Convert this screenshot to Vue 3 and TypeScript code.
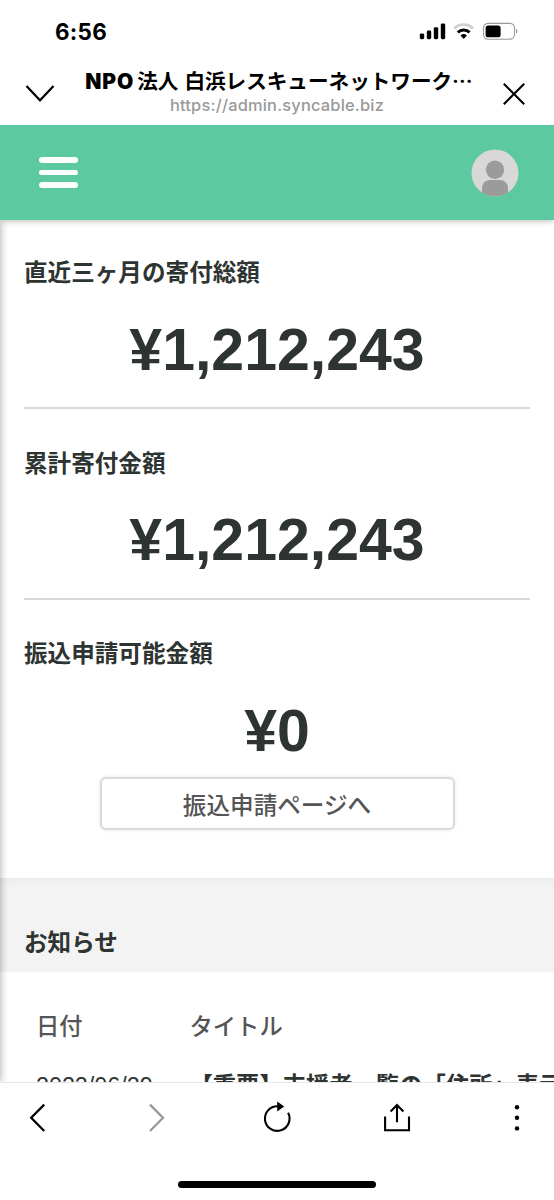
<script setup lang="ts">
interface Summary {
  label: string
  amount: string
}

const summaries: Summary[] = [
  { label: '直近三ヶ月の寄付総額', amount: '¥1,212,243' },
  { label: '累計寄付金額', amount: '¥1,212,243' },
  { label: '振込申請可能金額', amount: '¥0' },
]

const notices = [{ date: '2022/06/29', title: '【重要】支援者一覧の「住所」表示について' }]
</script>

<template>
  <div class="screen">
    <header class="browser-head">
      <div class="status">
        <span class="clock">6:56</span>
        <svg class="status-icons" width="100" height="20" viewBox="0 0 100 20">
          <rect x="0.8" y="12.4" width="4.4" height="5.8" rx="1.4" />
          <rect x="7.8" y="9.6" width="4.4" height="8.6" rx="1.4" />
          <rect x="14.8" y="6.2" width="4.4" height="12" rx="1.4" />
          <rect x="21.8" y="2.4" width="4.4" height="15.8" rx="1.4" />
          <g fill="none" stroke="#000">
            <path d="M35.2 7.4a13.8 13.8 0 0 1 19 0" stroke="#d0d0d0" stroke-width="2.8" />
            <path d="M38.8 11.4a8.6 8.6 0 0 1 11.8 0" stroke-width="2.9" />
          </g>
          <path d="M41.5 14.6a4.7 4.7 0 0 1 6.4 0L44.7 18z" />
          <rect x="64.5" y="2.4" width="31" height="15.8" rx="4.6" fill="none" stroke="#999" stroke-width="1.1" />
          <rect x="66.6" y="4.5" width="15" height="11.8" rx="2.6" />
          <path d="M97.1 7.6q2.6 2.7 0 5.4z" fill="#888" />
        </svg>
      </div>
      <div class="title-row">
        <svg class="chevron" width="32" height="20" viewBox="0 0 32 20">
          <path d="M2.5 2 16 16.3 29.5 2" fill="none" stroke="#000" stroke-width="2.2" />
        </svg>
        <div class="titles">
          <div class="page-title"><b class="latin">NPO</b><span class="jp">法人</span><span class="jp name">白浜レスキューネットワーク…</span></div>
          <div class="url">https://admin.syncable.biz</div>
        </div>
        <svg class="close" width="24" height="24" viewBox="0 0 24 24">
          <path d="M1.8 1.8 22.2 22.2M22.2 1.8 1.8 22.2" stroke="#000" stroke-width="2.1" />
        </svg>
      </div>
    </header>

    <div class="app-bar">
      <div class="burger"><i /><i /><i /></div>
      <svg width="48" height="48" viewBox="0 0 48 48">
        <defs>
          <clipPath id="avatar"><circle cx="24" cy="24" r="23.5" /></clipPath>
        </defs>
        <circle cx="24" cy="24" r="23.5" fill="#d8d8d8" />
        <g clip-path="url(#avatar)" fill="#9b9b9b">
          <circle cx="24" cy="20.7" r="9.2" />
          <rect x="11" y="31" width="26" height="24" rx="8" />
        </g>
      </svg>
    </div>

    <main class="content">
      <section v-for="item in summaries" :key="item.label" class="summary">
        <h2>{{ item.label }}</h2>
        <p class="amount">{{ item.amount }}</p>
      </section>
      <button class="transfer" type="button">振込申請ページへ</button>

      <div class="notice-head">お知らせ</div>
      <div class="table">
        <div class="row labels"><span>日付</span><span>タイトル</span></div>
        <div v-for="n in notices" :key="n.date" class="row">
          <span class="date">{{ n.date }}</span><span class="notice-title">{{ n.title }}</span>
        </div>
      </div>
    </main>

    <footer class="toolbar">
      <nav class="tools">
        <svg width="40" height="40" viewBox="0 0 40 40">
          <path d="M27.2 6.6 14.2 19.8 27.2 33" fill="none" stroke="#000" stroke-width="2.3" />
        </svg>
        <svg width="40" height="40" viewBox="0 0 40 40">
          <path d="M13 6.6 26 19.8 13 33" fill="none" stroke="#999" stroke-width="2.3" />
        </svg>
        <svg width="40" height="40" viewBox="0 0 40 40">
          <path d="M31.1 14.8A12.3 12.3 0 1 1 21 8.3" fill="none" stroke="#000" stroke-width="2.1" />
          <path d="M20.2 3.6 27.2 8.5 20.2 13.4z" />
        </svg>
        <svg width="40" height="40" viewBox="0 0 40 40" fill="none" stroke="#000" stroke-width="2.1">
          <path d="M8.1 18.5V32.3H32V18.5M20 24.2V7.2M13.6 13.4 20 7 26.4 13.4" />
        </svg>
        <svg width="40" height="40" viewBox="0 0 40 40">
          <circle cx="20" cy="9.2" r="2.2" /><circle cx="20" cy="19.8" r="2.2" /><circle cx="20" cy="30.4" r="2.2" />
        </svg>
      </nav>
      <div class="home" />
    </footer>
  </div>
</template>

<style>
body {
  margin: 0;
  background: #fff;
}
</style>

<style scoped>
.screen {
  width: 554px;
  height: 1200px;
  overflow: hidden;
  display: flex;
  flex-direction: column;
  background: #fff;
  color: #2e3432;
  font-family: "Liberation Sans", "Noto Sans CJK JP", sans-serif;
}
.browser-head {
  height: 125px;
  flex: none;
  color: #000;
  background: #fff;
  position: relative;
  z-index: 2;
}
.status {
  height: 66px;
  box-sizing: border-box;
  padding: 21px 35px 0 55px;
  display: flex;
  justify-content: space-between;
}
.clock {
  font: 700 22.4px/22px Inter, sans-serif;
  letter-spacing: 0.3px;
}
.title-row {
  display: flex;
  padding: 0 28px 0 24px;
  justify-content: space-between;
}
.chevron {
  margin-top: 17.5px;
}
.close {
  margin-top: 15.5px;
}
.titles {
  width: 430px;
  text-align: center;
}
.page-title {
  height: 30px;
  margin-top: -1px;
  display: flex;
  align-items: center;
  justify-content: center;
  white-space: nowrap;
}
.latin {
  font: 900 21px/30px Inter, sans-serif;
  letter-spacing: 0.9px;
  margin-right: 3px;
  padding-top: 3px;
}
.jp {
  font: 700 20.6px/30px "Noto Sans CJK JP", sans-serif;
}
.name {
  margin-left: 6px;
}
.url {
  font: 500 16.4px/18px Inter, sans-serif;
  letter-spacing: 0.2px;
  margin: 1px 4px 0 0;
  color: #999;
}
.app-bar {
  height: 95px;
  flex: none;
  box-sizing: border-box;
  padding: 0 35px 0 39px;
  display: flex;
  justify-content: space-between;
  align-items: center;
  background: #5cc9a0;
  box-shadow: 0 1px 6px rgba(0, 0, 0, 0.28);
  position: relative;
  z-index: 1;
}
.burger {
  display: grid;
  gap: 7px;
}
.burger i {
  width: 39px;
  height: 5.5px;
  border-radius: 3px;
  background: #fff;
}
.content {
  flex: 1;
  min-height: 0;
  overflow: hidden;
  position: relative;
}
.content::after {
  content: "";
  position: absolute;
  inset: 0 auto 0 -10px;
  width: 10px;
  box-shadow: 0 0 8px rgba(0, 0, 0, 0.36);
}
.summary {
  box-sizing: border-box;
  height: 190.6px;
  margin: 0 24px;
  padding-top: 35.5px;
  border-bottom: 2px solid #d9d9d9;
}
.summary:first-child {
  height: 189.4px;
  padding-top: 34px;
}
.summary:nth-child(3) {
  height: 177.4px;
  border: 0;
}
h2 {
  margin: 0;
  font: 700 23.6px/34px "Noto Sans CJK JP", sans-serif;
}
.amount {
  margin: 27.5px 0 0;
  text-align: center;
  font: 700 59px/68px "Liberation Sans", sans-serif;
}
.transfer {
  display: block;
  width: 355px;
  height: 53px;
  margin: 0 auto 47.6px;
  padding: 0;
  border: 2px solid #dadada;
  border-radius: 6px;
  background: #fff;
  box-shadow: 0 0 4px rgba(0, 0, 0, 0.1);
  color: #555;
  font: 500 23.6px/46px "Noto Sans CJK JP", sans-serif;
}
.notice-head {
  height: 94px;
  box-sizing: border-box;
  padding: 46px 24px 0;
  background: linear-gradient(#ebeeed, #f3f3f3 9px);
  font: 700 23.6px/34px "Noto Sans CJK JP", sans-serif;
}
.table {
  padding: 38px 0 0 36px;
}
.row {
  display: grid;
  grid-template-columns: 153.5px 1fr;
  height: 59.5px;
  white-space: nowrap;
  font: 400 23.3px/34px "Liberation Sans", "Noto Sans CJK JP", sans-serif;
}
.labels {
  color: #555;
  font-weight: 500;
}
.notice-title {
  font-weight: 700;
}
.toolbar {
  height: 118px;
  flex: none;
  box-sizing: border-box;
  border-top: 1px solid #e6e6e6;
  background: #fff;
}
.tools {
  display: flex;
  justify-content: space-between;
  padding: 15px 17px 0;
}
.home {
  width: 198px;
  height: 7.5px;
  margin: 42.5px auto 0;
  border-radius: 4px;
  background: #000;
}
</style>
